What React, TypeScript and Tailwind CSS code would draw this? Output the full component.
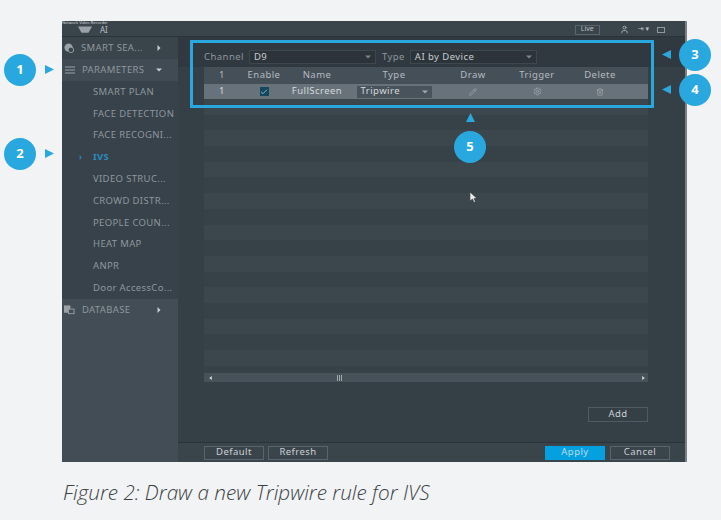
import React from "react";
import { Pencil, Settings, Trash2, User, Check } from "lucide-react";

const sans = "font-['Noto_Sans','DejaVu_Sans',sans-serif]";

function Badge({ n, className }: { n: string; className: string }) {
  return (
    <div className={`absolute flex h-8 w-8 items-center justify-center rounded-full bg-[#29a7df] text-[13px] font-bold text-white ${className}`}>
      {n}
    </div>
  );
}

function Arrow({ dir, className }: { dir: "left" | "right" | "up"; className: string }) {
  const pts = dir === "right" ? "0,0 9,4.5 0,9" : dir === "left" ? "9,0 0,4.5 9,9" : "4.5,0 9,9 0,9";
  return (
    <svg viewBox="0 0 9 9" className={`absolute h-[9px] w-[9px] ${className}`}>
      <polygon points={pts} fill="#29a7df" />
    </svg>
  );
}

function Caret({ down, color = "#c8ccd0" }: { down?: boolean; color?: string }) {
  return (
    <svg viewBox="0 0 6 6" className="h-[6px] w-[6px] shrink-0">
      <polygon points={down ? "0,1.5 6,1.5 3,4.5" : "1.5,0 4.5,3 1.5,6"} fill={color} />
    </svg>
  );
}

const subItems = ["SMART PLAN", "FACE DETECTION", "FACE RECOGNI...", "IVS", "VIDEO STRUC...", "CROWD DISTR...", "PEOPLE COUN...", "HEAT MAP", "ANPR", "Door AccessCo..."];

function Sidebar() {
  return (
    <aside className="flex w-[116px] shrink-0 flex-col bg-[#37424a] text-[9.5px] tracking-[0.35px] text-[#8f979e]">
      <div className="flex h-[22px] items-center bg-[#3a444b] pl-[2px]">
        <svg viewBox="0 0 12 12" className="h-[11px] w-[11px]">
          <circle cx="5" cy="5" r="4.5" fill="#9aa1a7" />
          <circle cx="7.5" cy="7.5" r="3" fill="#39434b" stroke="#9aa1a7" />
        </svg>
        <span className="ml-[6px] w-[75px] whitespace-nowrap">SMART SEA...</span>
        <Caret />
      </div>
      <div className="flex h-[22px] items-center bg-[#414b53] pl-[3px]">
        <svg viewBox="0 0 10 8" className="h-[8px] w-[10px]">
          <path d="M0 1h10M0 4h10M0 7h10" stroke="#9aa1a7" strokeWidth="1" />
        </svg>
        <span className="ml-[7px] w-[74px] whitespace-nowrap">PARAMETERS</span>
        <Caret down />
      </div>
      <div className="flex flex-col">
        {subItems.map((s) => (
          <div key={s} className={`relative flex h-[21.8px] items-center pl-[31px] ${s === "IVS" ? "font-bold text-[#2a8cc0]" : ""}`}>
            {s === "IVS" && <span className="absolute left-[17px] text-[8px] leading-none">›</span>}
            <span className="whitespace-nowrap">{s}</span>
          </div>
        ))}
      </div>
      <div className="flex flex-1 flex-col bg-[#424d55]">
        <div className="flex h-[22px] items-center pl-[2px]">
          <svg viewBox="0 0 12 10" className="h-[10px] w-[11px]">
            <rect x="0" y="0" width="7" height="8" fill="#9aa1a7" />
            <rect x="5" y="4" width="6" height="5" fill="#424d55" stroke="#9aa1a7" />
          </svg>
          <span className="ml-[7px] w-[74px] whitespace-nowrap">DATABASE</span>
          <Caret />
        </div>
      </div>
    </aside>
  );
}

const cols = "grid grid-cols-[36px_48px_58px_96px_62px_66px_60px_1fr] items-center";

function Select({ label, className }: { label: string; className: string }) {
  return (
    <div className={`flex h-[14px] items-center justify-between border border-[#3d474e] bg-[#2c343a] px-[4px] text-[#c8ccd0] ${className}`}>
      <span>{label}</span>
      <Caret down color="#7d858b" />
    </div>
  );
}

function Rules() {
  return (
    <div className="h-[30px] w-full bg-[#30393f] pt-[13px] pl-[26px] text-[9.5px] tracking-[0.45px]">
      <div className="flex items-center">
        <span className="text-[#8f979e]">Channel</span>
        <Select label="D9" className="ml-[5px] w-[127px]" />
        <span className="ml-[6px] text-[#8f979e]">Type</span>
        <Select label="AI by Device" className="ml-[5px] w-[127px]" />
      </div>
    </div>
  );
}

function Table() {
  return (
    <div className="ml-[26px] flex w-[444px] flex-col text-center text-[9.5px] tracking-[0.45px]">
      <div className={`${cols} h-[17px] bg-[#454f57] text-[#b5bbc0]`}>
        <span>1</span><span>Enable</span><span>Name</span><span>Type</span><span>Draw</span><span>Trigger</span><span>Delete</span><span />
      </div>
      <div className={`${cols} h-[15px] bg-[#68727a] text-[#d5d9dc]`}>
        <span>1</span>
        <span className="flex justify-center">
          <span className="flex h-[9px] w-[9px] items-center justify-center bg-[#13485f]">
            <Check size={8} color="#d7eef7" strokeWidth={2} />
          </span>
        </span>
        <span className="whitespace-nowrap">FullScreen</span>
        <span className="flex h-[12px] w-[75px] items-center justify-between justify-self-center bg-[#49535b] px-[4px] text-left">
          <span>Tripwire</span>
          <Caret down color="#a2a9ae" />
        </span>
        <span className="flex justify-center"><Pencil size={8} color="#a2a9ae" /></span>
        <span className="flex justify-center"><Settings size={9} color="#a2a9ae" /></span>
        <span className="flex justify-center"><Trash2 size={8} color="#a2a9ae" /></span>
        <span />
      </div>
      <div className="flex h-[274px] flex-col overflow-hidden">
        {Array.from({ length: 18 }).map((_, i) => (
          <div key={i} className={`h-[15.7px] shrink-0 ${i % 2 === 0 ? "bg-[#3c464d]" : "bg-[#374148]"}`} />
        ))}
      </div>
      <div className="flex h-[9px] items-center bg-[#47515a] pr-[3px] pl-[5px]">
        <svg viewBox="0 0 4 6" className="h-[4px] w-[3px]"><polygon points="4,0 0,3 4,6" fill="#d5d9dc" /></svg>
        <div className="flex flex-1 items-center gap-[1px] pl-[125px]">
          <span className="h-[6px] w-px bg-[#a2a9ae]" /><span className="h-[6px] w-px bg-[#a2a9ae]" /><span className="h-[6px] w-px bg-[#a2a9ae]" />
        </div>
        <svg viewBox="0 0 4 6" className="h-[4px] w-[3px]"><polygon points="0,0 4,3 0,6" fill="#d5d9dc" /></svg>
      </div>
    </div>
  );
}

function Btn({ children, primary }: { children: React.ReactNode; primary?: boolean }) {
  return (
    <div className={`flex h-[14px] w-[60px] items-center justify-center border text-[9.5px] tracking-[0.45px] ${primary ? "border-[#05a0e0] bg-[#05a0e0] text-[#b9dff2]" : "border-[#5a646c] text-[#cdd1d5]"}`}>
      {children}
    </div>
  );
}

function Main() {
  return (
    <main className="flex min-w-0 flex-1 flex-col bg-[#353f46]">
      <div className="flex flex-1 flex-col">
        <Rules />
        <Table />
        <div className="mt-[25px] flex w-[470px] justify-end">
          <div className="flex h-[15px] w-[60px] items-center justify-center border border-[#505a62] text-[9.5px] tracking-[0.45px] text-[#cdd1d5]">Add</div>
        </div>
      </div>
      <div className="flex h-[20px] items-center border-t border-[#2b3339] bg-[#3a444b] pr-[15px] pl-[26px]">
        <Btn>Default</Btn>
        <div className="ml-[4px]"><Btn>Refresh</Btn></div>
        <div className="ml-auto"><Btn primary>Apply</Btn></div>
        <div className="ml-[5px]"><Btn>Cancel</Btn></div>
      </div>
    </main>
  );
}

export default function App() {
  return (
    <div className={`relative h-[520px] w-[721px] overflow-hidden bg-[#f2f3f4] pt-[21px] pl-[62px] ${sans}`}>
      <div className="flex h-[441px] w-[625px] flex-col border-r-2 border-[#7a8287] bg-[#353f46]">
        <header className="relative flex h-[16px] shrink-0 items-center overflow-hidden border-b border-[#2b3339] bg-[#3a444b] text-[8px] text-[#b9bfc4]">
          <span className="absolute top-0 left-0 text-[4px] leading-[4px] whitespace-nowrap text-[#d5d9dc]">Network Video Recorder</span>
          <svg viewBox="0 0 16 8" className="mt-[3px] ml-[16px] h-[8px] w-[14px]">
            <path d="M0 0h16L12 7H4z" fill="#9aa1a7" />
          </svg>
          <span className="mt-[2px] ml-[8px]">AI</span>
          <div className="mt-[2px] ml-auto flex items-center">
            <span className="flex h-[10px] w-[25px] items-center justify-center border border-[#5a646c] text-[7px]">Live</span>
            <User size={9} className="ml-[20px]" />
            <span className="ml-[9px] text-[7px]">⇥ ▾</span>
            <span className="mr-[20px] ml-[8px] h-[6px] w-[8px] border border-[#8f979e]" />
          </div>
        </header>
        <div className="flex min-h-0 flex-1">
          <Sidebar />
          <Main />
        </div>
      </div>

      <p className="mt-[18px] ml-[1px] font-['Open_Sans',sans-serif] text-[20.7px] leading-[24px] font-light whitespace-nowrap text-[#3a3f44] italic">Figure 2: Draw a new Tripwire rule for IVS</p>

      {/* annotations */}
      <div className="absolute top-[40px] left-[190px] h-[68px] w-[464px] border-[3px] border-[#29a7df]" />
      <Badge n="1" className="top-[54px] left-[4px]" />
      <Arrow dir="right" className="top-[65px] left-[45px]" />
      <Badge n="2" className="top-[138px] left-[4px]" />
      <Arrow dir="right" className="top-[149px] left-[45px]" />
      <Badge n="3" className="top-[39px] left-[679px]" />
      <Arrow dir="left" className="top-[50px] left-[662px]" />
      <Badge n="4" className="top-[74px] left-[679px]" />
      <Arrow dir="left" className="top-[85px] left-[662px]" />
      <Badge n="5" className="top-[131px] left-[454px]" />
      <Arrow dir="up" className="top-[113px] left-[466px]" />
      <svg viewBox="0 0 8 11" className="absolute top-[192px] left-[470px] h-[11px] w-[8px]">
        <path d="M0 0v9l2.5-2 1.5 3.500 1.500-.7-1.500-3.300H7z" fill="#e8eaec" stroke="#222" strokeWidth="0.500" />
      </svg>
    </div>
  );
}
